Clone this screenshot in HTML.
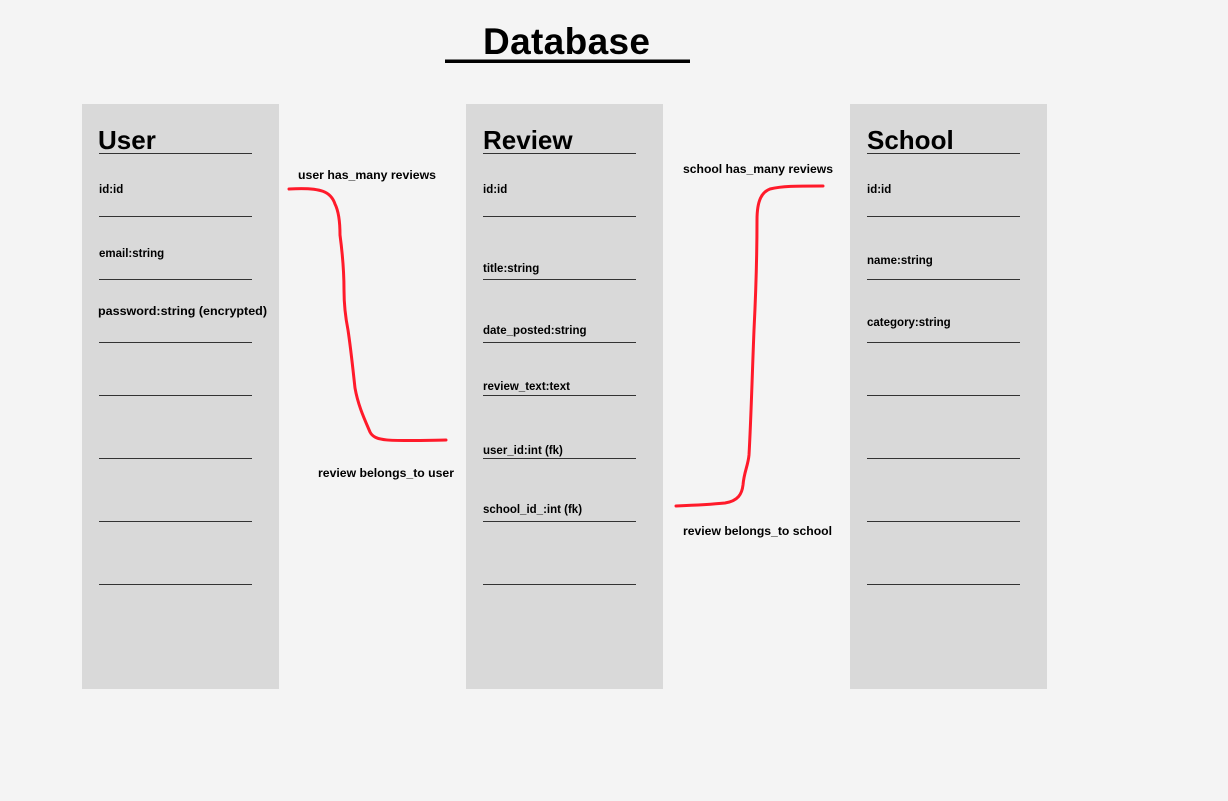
<!DOCTYPE html>
<html><head><meta charset="utf-8"><style>
html,body{margin:0;padding:0;background:#f4f4f4;}
svg{display:block;}
text{font-family:"Liberation Sans",Arial,sans-serif;font-weight:bold;fill:#000;}
.f{font-size:11.5px;}
.h{font-size:26px;}
</style></head><body>
<svg width="1228" height="801" viewBox="0 0 1228 801" xmlns="http://www.w3.org/2000/svg">
<rect width="1228" height="801" fill="#f4f4f4"/>
<text x="483" y="54" font-size="37" textLength="167">Database</text>
<rect x="445" y="59.5" width="245" height="3.5" fill="#000"/>

<rect x="82" y="104" width="197" height="585" fill="#d9d9d9"/>
<rect x="466" y="104" width="197" height="585" fill="#d9d9d9"/>
<rect x="850" y="104" width="197" height="585" fill="#d9d9d9"/>

<g stroke="#333" stroke-width="1">
<path d="M99 153.5H252M99 216.5H252M99 279.5H252M99 342.5H252M99 395.5H252M99 458.5H252M99 521.5H252M99 584.5H252"/>
<path d="M483 153.5H636M483 216.5H636M483 279.5H636M483 342.5H636M483 395.5H636M483 458.5H636M483 521.5H636M483 584.5H636"/>
<path d="M867 153.5H1020M867 216.5H1020M867 279.5H1020M867 342.5H1020M867 395.5H1020M867 458.5H1020M867 521.5H1020M867 584.5H1020"/>
</g>

<text class="h" x="98" y="149">User</text>
<text class="h" x="483" y="149">Review</text>
<text class="h" x="867" y="149">School</text>

<text class="f" x="99" y="193">id:id</text>
<text class="f" x="99" y="257">email:string</text>
<text class="f" x="98" y="315" textLength="169" lengthAdjust="spacingAndGlyphs">password:string (encrypted)</text>

<text class="f" x="483" y="193">id:id</text>
<text class="f" x="483" y="272">title:string</text>
<text class="f" x="483" y="334">date_posted:string</text>
<text class="f" x="483" y="390">review_text:text</text>
<text class="f" x="483" y="454">user_id:int (fk)</text>
<text class="f" x="483" y="513">school_id_:int (fk)</text>

<text class="f" x="867" y="193">id:id</text>
<text class="f" x="867" y="264">name:string</text>
<text class="f" x="867" y="326">category:string</text>

<text class="f" x="298" y="179" textLength="138" lengthAdjust="spacingAndGlyphs">user has_many reviews</text>
<text class="f" x="318" y="477" textLength="136" lengthAdjust="spacingAndGlyphs">review belongs_to user</text>
<text class="f" x="683" y="173" textLength="150" lengthAdjust="spacingAndGlyphs">school has_many reviews</text>
<text class="f" x="683" y="535" textLength="149" lengthAdjust="spacingAndGlyphs">review belongs_to school</text>

<g fill="none" stroke="#ff1a2a" stroke-width="3" stroke-linecap="round" stroke-linejoin="round">
<path d="M289 189 C 322 187 331 192 335 204 C 339 212 340 222 340 235 C 342 250 344 270 344 290 C 344 305 346 320 348 330 C 351 350 353 370 355 388 C 358 405 364 418 370 432 C 375 442 390 441 446 440"/>
<path d="M676 506 C 700 505 715 504 725 503 C 738 501 742 494 743 485 C 744 472 748 466 749 455 C 751 420 752 380 754 330 C 756 290 757 250 757 220 C 757 200 762 192 770 189 C 782 186 795 186 823 186"/>
</g>
</svg>
</body></html>
